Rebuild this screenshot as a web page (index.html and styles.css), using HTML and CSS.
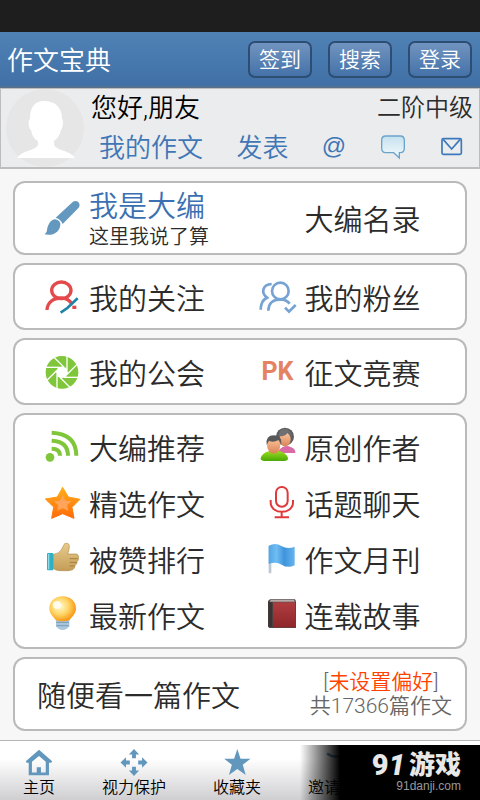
FILE: index.html
```html
<!DOCTYPE html>
<html lang="zh-CN">
<head>
    <meta charset="UTF-8">
    <meta name="viewport" content="width=device-width, initial-scale=1.0">
    <title>作文宝典</title>
    <link rel="stylesheet" href="styles.css">
</head>

<body>

    <div class="status-bar"></div>

    <header class="header">
        <h1>作文宝典</h1>
        <div class="header-btns">
            <button type="button">签到</button>
            <button type="button">搜索</button>
            <button type="button">登录</button>
        </div>
    </header>

    <!-- 用户信息 -->
    <section class="user">
        <svg class="avatar" viewBox="0 0 80 80" aria-hidden="true">
            <circle cx="40" cy="40" r="39" fill="#e6e6e7"/>
            <path d="M39 13c12 0 18 7 18 18 2 1 1 9-1 11-1 5-4 9-7 11v4c3 6 16 5 21 13H12c5-8 18-7 21-13v-4c-4-2-6-6-7-11-3-2-3-10-1-11 0-11 4-18 14-18z" fill="#fff"/>
        </svg>
        <div class="user-info">
            <div class="user-top">
                <span class="hello">您好,朋友</span>
                <span class="level">二阶中级</span>
            </div>
            <div class="user-links">
                <a href="#">我的作文</a>
                <a href="#">发表</a>
                <a class="at" href="#">@</a>
                <a href="#" aria-label="评论">
                    <svg width="26" height="26" viewBox="0 0 78 78">
                        <defs>
                            <linearGradient id="bubble" x2="0" y2="1"><stop offset="0" stop-color="#c5e1ee"/><stop offset="1" stop-color="#f4fbfd"/></linearGradient>
                        </defs>
                        <path d="M17 3h44q12 0 12 13v24q0 13-12 13h-3v16L41 53H17Q5 53 5 40V16Q5 3 17 3z" fill="url(#bubble)" stroke="#6ba4cb" stroke-width="4"/>
                    </svg>
                </a>
                <a href="#" aria-label="私信">
                    <svg width="26" height="26" viewBox="0 0 78 78" fill="none" stroke="#3d78bb" stroke-width="5">
                        <rect x="9" y="11" width="58" height="47" rx="4"/>
                        <path d="M13 14l25 28 25-28"/>
                    </svg>
                </a>
            </div>
        </div>
    </section>

    <main class="content">
        <section class="card tall">
            <a class="item" href="#">
                <svg class="icon" viewBox="0 0 120 120" fill="#6598bf">
                    <path d="M92 12c12-10 27 5 18 17L62 78c-5-11-10-16-21-19z"/>
                    <path d="M38 64c13 1 20 10 16 22-5 20-26 28-47 23 11-7 6-14 11-25 4-11 10-18 20-20z"/>
                </svg>
                <span class="label two-line">
                    <span class="blue">我是大编</span>
                    <small>这里我说了算</small>
                </span>
            </a>
            <a class="item" href="#">
                <span class="icon"></span>
                <span class="label">大编名录</span>
            </a>
        </section>

        <section class="card">
            <a class="item" href="#">
                <svg class="icon" viewBox="0 0 120 120" fill="none" stroke-width="10">
                    <g stroke="#e4494b">
                        <ellipse cx="58" cy="40" rx="29" ry="25"/>
                        <path d="M15 99c1-22 18-36 43-36 14 0 25 7 32 18"/>
                        <path d="M91 91h12"/>
                    </g>
                    <path d="M56 107l20-14 31-29" stroke="#1f83a8" stroke-width="8"/>
                </svg>
                <span class="label">我的关注</span>
            </a>
            <a class="item" href="#">
                <svg class="icon" viewBox="0 0 120 120" fill="none" stroke="#76a3d3" stroke-width="8">
                    <circle cx="67" cy="42" r="25"/>
                    <path d="M31 101c0-23 15-34 36-34 13 0 22 5 28 13"/>
                    <path d="M41 21C12 23 9 48 27 62 14 68 8 80 8 98"/>
                    <path d="M81 92l12 12 20-20"/>
                </svg>
                <span class="label">我的粉丝</span>
            </a>
        </section>

        <section class="card">
            <a class="item" href="#">
                <svg class="icon" viewBox="0 0 120 120">
                    <circle cx="60" cy="61" r="49" fill="#80c63b"/>
                    <path d="M60 43l13 5 5 13-5 13-13 5-13-5-5-13 5-13z" fill="#fff"/>
                    <g stroke="#fff" stroke-width="4">
                        <path id="blade" d="M75 9v46"/>
                        <use href="#blade" transform="rotate(45 60 61)"/>
                        <use href="#blade" transform="rotate(90 60 61)"/>
                        <use href="#blade" transform="rotate(135 60 61)"/>
                        <use href="#blade" transform="rotate(180 60 61)"/>
                        <use href="#blade" transform="rotate(225 60 61)"/>
                        <use href="#blade" transform="rotate(270 60 61)"/>
                        <use href="#blade" transform="rotate(315 60 61)"/>
                    </g>
                </svg>
                <span class="label">我的公会</span>
            </a>
            <a class="item" href="#">
                <span class="icon pk">PK</span>
                <span class="label">征文竞赛</span>
            </a>
        </section>

        <section class="card list">
            <a class="item" href="#">
                <svg class="icon" viewBox="0 0 120 120" fill="none" stroke="#80c63b" stroke-width="12">
                    <circle cx="24" cy="91" r="13" fill="#80c63b" stroke="none"/>
                    <path d="M29 65q25 0 25 21M29 41q49 2 49 45M29 17q74 4 74 69"/>
                </svg>
                <span class="label">大编推荐</span>
            </a>
            <a class="item" href="#">
                <svg class="icon" viewBox="0 0 120 120">
                    <defs>
                        <linearGradient id="green" x2="0" y2="1"><stop offset="0" stop-color="#9bdc20"/><stop offset="1" stop-color="#49a806"/></linearGradient>
                        <linearGradient id="face" x2="0" y2="1"><stop offset="0" stop-color="#ffc9a0"/><stop offset="1" stop-color="#d98256"/></linearGradient>
                    </defs>
                    <path d="M62 70q18-20 36-10 15 5 14 18H60z" fill="#d96aa5"/>
                    <circle cx="81" cy="29" r="27" fill="#5d5d5f"/>
                    <ellipse cx="81" cy="37" rx="17" ry="21" fill="url(#face)"/>
                    <path d="M62 28q24 0 28-14l12 18q-2-26-23-26-17 1-17 22z" fill="#707072"/>
                    <path d="M8 94q4-17 27-22h28q23 5 27 22 0 8-12 8H20q-12 0-12-8z" fill="url(#green)"/>
                    <ellipse cx="47" cy="55" rx="20" ry="25" fill="url(#face)"/>
                    <path d="M26 54q-4-29 22-29 25 0 22 27l-8-13q-17 9-29 2z" fill="#58585b"/>
                </svg>
                <span class="label">原创作者</span>
            </a>
            <a class="item" href="#">
                <svg class="icon" viewBox="0 0 120 120">
                    <defs>
                        <linearGradient id="star" x2="0" y2="1"><stop offset="0" stop-color="#ffb019"/><stop offset="1" stop-color="#ff6a0a"/></linearGradient>
                    </defs>
                    <path d="M62 13l17 29 35 7-24 24 6 33-34-14-33 14 6-34L10 48l36-6z" fill="url(#star)" stroke="url(#star)" stroke-width="3" stroke-linejoin="round"/>
                    <path d="M62 36l8 17 18 2-13 12 4 16-17-7-17 7 4-16-13-12 18-2z" fill="#ffa45a"/>
                </svg>
                <span class="label">精选作文</span>
            </a>
            <a class="item" href="#">
                <svg class="icon" viewBox="0 0 120 120" fill="none" stroke="#e0393c" stroke-width="6">
                    <rect x="54" y="12" width="35" height="59" rx="17"/>
                    <path d="M38 51v7c0 38 67 38 67 0v-7M71 87v17M50 103h43"/>
                </svg>
                <span class="label">话题聊天</span>
            </a>
            <a class="item" href="#">
                <svg class="icon" viewBox="0 0 120 120">
                    <defs>
                        <linearGradient id="hand" x2="0" y2="1"><stop offset="0" stop-color="#e8cb8a"/><stop offset="1" stop-color="#c49d58"/></linearGradient>
                    </defs>
                    <path d="M34 46q18-2 24-14l10-18q12-4 14 6 0 12-5 25h27q8 4 5 12 2 7-4 11 1 8-6 11 0 9-7 13l-12 3H54q-10 0-20-6z" fill="url(#hand)" stroke="#b08c4c" stroke-width="2"/>
                    <path d="M83 59h24M83 70h22M83 81h16" stroke="#a67f3e" stroke-width="3"/>
                    <rect x="15" y="42" width="19" height="52" rx="3" fill="#2fb0c6"/>
                    <path d="M20 45v46" stroke="#8bdce6" stroke-width="4"/>
                </svg>
                <span class="label">被赞排行</span>
            </a>
            <a class="item" href="#">
                <svg class="icon" viewBox="0 0 120 120">
                    <defs>
                        <linearGradient id="flag"><stop offset="0" stop-color="#4fa5e5"/><stop offset=".3" stop-color="#70bdf3"/><stop offset=".6" stop-color="#3f94db"/><stop offset="1" stop-color="#65b4ee"/></linearGradient>
                    </defs>
                    <path d="M32 22h8v79q-4 4-8 0z" fill="#bdc7d1"/>
                    <path d="M32 20q21-11 38 1 19 11 40 2v56q-21 10-39-2-17-11-39-2z" fill="url(#flag)"/>
                </svg>
                <span class="label">作文月刊</span>
            </a>
            <a class="item" href="#">
                <svg class="icon" viewBox="0 0 120 120">
                    <defs>
                        <radialGradient id="bulb" cx=".4" cy=".4" r=".6"><stop offset="0" stop-color="#fffbd0"/><stop offset=".55" stop-color="#ffd567"/><stop offset="1" stop-color="#f99a16"/></radialGradient>
                    </defs>
                    <path d="M42 72h40v22q-8 11-20 11T42 94z" fill="#a9c6dc"/>
                    <path d="M43 82h38M44 92h36" stroke="#7899b4" stroke-width="3"/>
                    <path d="M62 4c24 0 40 15 40 36 0 17-12 25-19 35q-21 8-42 0C34 65 22 57 22 40 22 19 38 4 62 4z" fill="url(#bulb)"/>
                    <ellipse cx="45" cy="30" rx="13" ry="12" fill="#fff" opacity=".8"/>
                </svg>
                <span class="label">最新作文</span>
            </a>
            <a class="item" href="#">
                <svg class="icon" viewBox="0 0 120 120">
                    <defs>
                        <linearGradient id="book" x2="0" y2="1"><stop offset="0" stop-color="#b03d40"/><stop offset="1" stop-color="#8e2629"/></linearGradient>
                    </defs>
                    <path d="M30 18l6-5h75l3 6v80H34l-4-4z" fill="#554747"/>
                    <path d="M38 15h70l3 5H35z" fill="#b9a9a7"/>
                    <rect x="45" y="22" width="66" height="75" fill="url(#book)"/>
                    <path d="M31 22h12v75l-12-3z" fill="#3a3333"/>
                </svg>
                <span class="label">连载故事</span>
            </a>
        </section>

        <section class="card random">
            <a class="label" href="#">随便看一篇作文</a>
            <div class="prefer">
                <div>[<a href="#">未设置偏好</a>]</div>
                <div>共17366篇作文</div>
            </div>
        </section>
    </main>

    <nav class="tabs">
        <a href="#">
            <svg viewBox="0 0 84 84" fill="#6297bd">
                <path d="M42 2l41 36-3 5h-7v39H10V43H3l-2-5zM20 40v33h15V57h13v16h15V40L42 22z"/>
            </svg>
            主页
        </a>
        <a href="#">
            <svg viewBox="0 0 84 84" fill="#6297bd">
                <path id="arrow" d="M42 0l16 17H48v12H36V17H26z"/>
                <use href="#arrow" transform="rotate(90 42 42)"/>
                <use href="#arrow" transform="rotate(180 42 42)"/>
                <use href="#arrow" transform="rotate(270 42 42)"/>
            </svg>
            视力保护
        </a>
        <a href="#">
            <svg viewBox="0 0 84 84" fill="#6297bd">
                <path d="M43 0l10 30h31L60 49l9 32-26-19-26 19 9-32L2 30h31z"/>
            </svg>
            收藏夹
        </a>
        <a href="#">
            <svg viewBox="0 0 84 84" fill="none" stroke="#6297bd" stroke-width="8">
                <path d="M2 14q18 14 38 8t38 20"/>
            </svg>
            邀请好友
        </a>
        <div class="watermark">
            <div class="logo"><span class="num">9<i>1</i></span><b>游戏</b></div>
            <div class="site">91danji.com</div>
        </div>
    </nav>

</body>
</html>
```

FILE: styles.css
```css
* {
    box-sizing: border-box;
}
body {
    font-family: Roboto, "Noto Sans CJK SC", sans-serif;
    font-weight: 350;
    margin: 0;
    min-height: 100vh;
    display: flex;
    flex-direction: column;
    background: #f7f7f7;
    color: #2b2b2b;
}
a {
    color: inherit;
    text-decoration: none;
}
svg {
    display: block;
}
.status-bar {
    height: 32px;
    background: #1e1e1e;
}
.header {
    display: flex;
    justify-content: space-between;
    align-items: center;
    height: 56px;
    padding: 0 8px 0 7px;
    background: linear-gradient(to bottom, #5082b6, #4070a6);
    border-bottom: 2px solid #55718f;
    color: #fff;
}
.header h1 {
    margin: 0;
    padding-top: 4px;
    font-size: 26px;
    font-weight: 350;
    line-height: 36px;
}
.header-btns {
    display: flex;
    gap: 16px;
}
.header-btns button {
    width: 64px;
    height: 37px;
    padding: 2px 0 0;
    border: 2px solid #2d4d73;
    border-radius: 7px;
    background: linear-gradient(to bottom, #7194c0, #4472a8);
    color: #fff;
    font-family: inherit;
    font-size: 21px;
    font-weight: 350;
    line-height: 30px;
    cursor: pointer;
}

/* 用户信息 */
.user {
    display: flex;
    align-items: center;
    height: 81px;
    padding: 0 6px 0 4px;
    background: #ebecee;
    border: 1px solid #bdbdbd;
    border-bottom-width: 2px;
}
.avatar {
    flex: none;
    width: 80px;
    height: 80px;
}
.user-info {
    flex: 1;
    padding-left: 6px;
}
.user-top {
    display: flex;
    justify-content: space-between;
    line-height: 40px;
}
.hello {
    color: #000;
    font-size: 26px;
}
.level {
    font-size: 24px;
}
.user-links {
    display: flex;
    align-items: center;
    justify-content: space-between;
    padding: 0 8px;
    color: #3f76b5;
    font-size: 26px;
    line-height: 40px;
}
.at {
    font-family: "Liberation Sans", sans-serif;
    font-size: 24px;
    line-height: 32px;
    padding-bottom: 4px;
}

.content {
    display: flex;
    flex-direction: column;
    gap: 8px;
    padding: 12px 13px 9px;
}
.card {
    display: grid;
    grid-template-columns: 1fr 1fr;
    column-gap: 8px;
    padding: 4px 0 3px 27px;
    background: #fff;
    border: 2px solid #bababa;
    border-radius: 12px;
    font-size: 29px;
    line-height: 50px;
}
.item {
    display: flex;
    align-items: center;
    gap: 7px;
}
.icon {
    flex: none;
    width: 40px;
    height: 40px;
}
.label {
    padding-top: 6px;
}
.pk {
    color: #e5825f;
    font-size: 25px;
    font-weight: 700;
    line-height: 40px;
    text-align: center;
}
.two-line {
    line-height: 32px;
}
.two-line span,
.two-line small {
    display: block;
}
.two-line small {
    font-size: 20px;
    line-height: 28px;
}
.blue {
    color: #3a70b2;
}
.tall {
    padding-top: 2px;
    padding-bottom: 2px;
}
.list {
    padding-bottom: 4px;
}
.random {
    display: flex;
    justify-content: space-between;
    align-items: center;
    padding: 7px 13px 7px 22px;
}
.prefer {
    color: #666;
    font-size: 21px;
    line-height: 24px;
    text-align: center;
}
.prefer a {
    color: #ff4200;
}

/* 底部导航 */
.tabs {
    position: relative;
    display: flex;
    gap: 47px;
    margin-top: auto;
    height: 60px;
    padding: 8px 23px 0;
    border-top: 1px solid #b5b5b5;
    background: linear-gradient(to bottom, #fff 30%, #cfcfd2);
    color: #000;
    font-size: 16px;
    line-height: 24px;
}
.tabs a {
    display: flex;
    flex-direction: column;
    align-items: center;
    flex: none;
}
.tabs svg {
    width: 28px;
    height: 28px;
}
.watermark {
    position: absolute;
    right: 0;
    bottom: 0;
    width: 180px;
    height: 55px;
    padding: 6px 19px 0 0;
    background: linear-gradient(to right, transparent, #000 40px);
    text-align: right;
}
.logo {
    display: flex;
    justify-content: flex-end;
    align-items: center;
    gap: 4px;
    color: #e8e8e8;
    font-size: 26px;
    font-weight: 700;
    line-height: 28px;
}
.num {
    font-size: 29px;
    font-weight: 900;
}
.site {
    color: #999;
    font-family: "Liberation Sans", sans-serif;
    font-size: 12px;
    line-height: 14px;
}
```
